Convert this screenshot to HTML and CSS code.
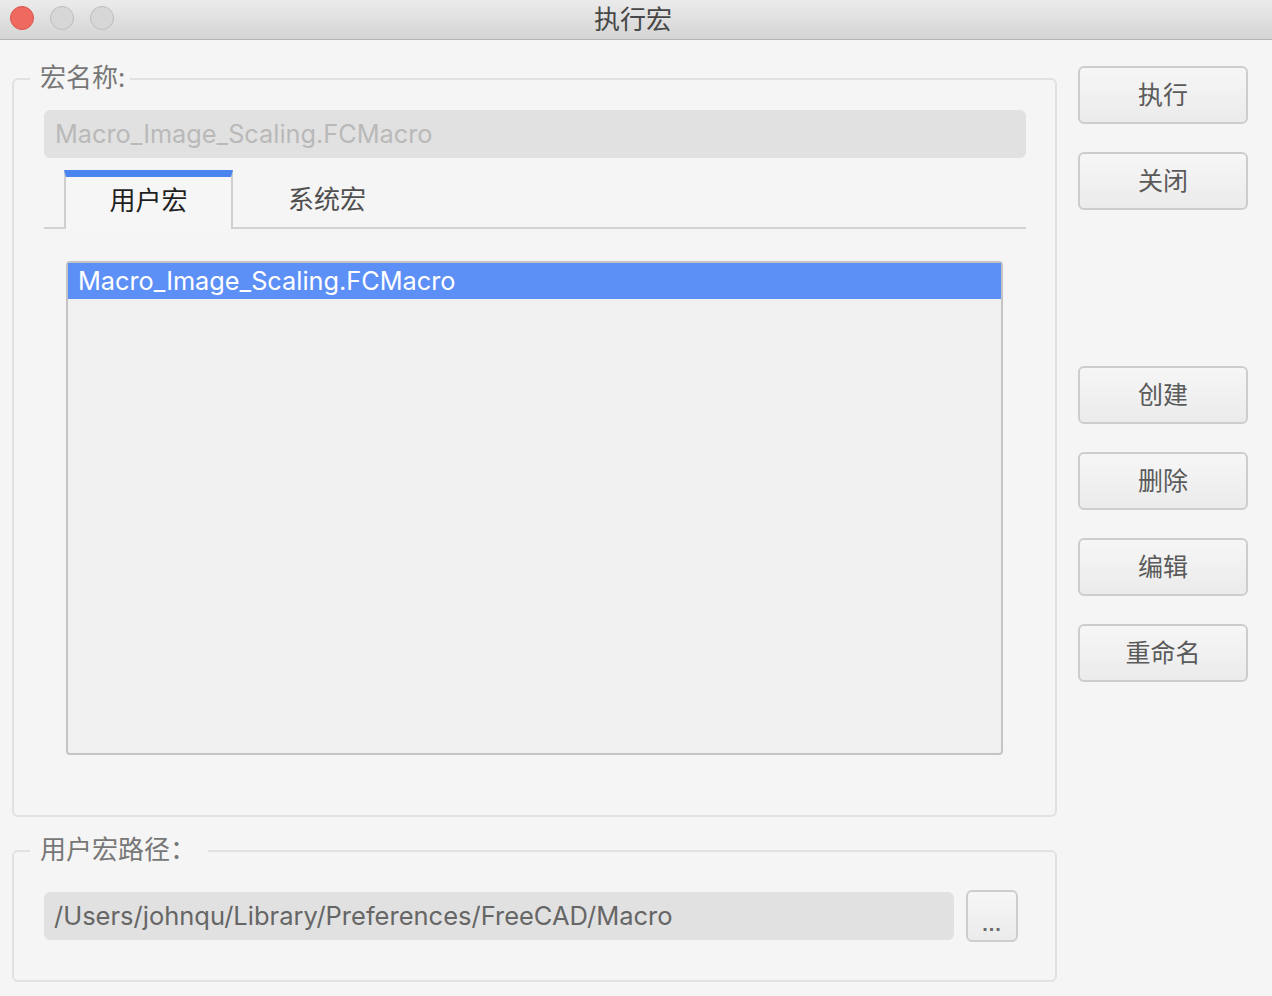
FILE: index.html
```html
<!DOCTYPE html>
<html lang="zh">
<head>
<meta charset="utf-8">
<title>执行宏</title>
<link rel="stylesheet" href="styles.css">
</head>
<body>
<div class="window">
  <div class="titlebar">
    <div class="lights">
      <span class="light red"></span>
      <span class="light"></span>
      <span class="light"></span>
    </div>
    <div class="title">执行宏</div>
  </div>
  <div class="main">
    <div class="left">
      <fieldset class="group group-name">
        <legend class="legend legend-name">宏名称:</legend>
        <div class="field disabled">Macro_Image_Scaling.FCMacro</div>
        <div class="tabs">
          <div class="tab-gap"></div>
          <div class="tab active">用户宏</div>
          <div class="tab">系统宏</div>
          <div class="tab-rest"></div>
        </div>
        <div class="list">
          <div class="row selected">Macro_Image_Scaling.FCMacro</div>
        </div>
      </fieldset>
      <fieldset class="group group-path">
        <legend class="legend legend-path">用户宏路径：</legend>
        <div class="path-row">
          <div class="field path">/Users/johnqu/Library/Preferences/FreeCAD/Macro</div>
          <button class="btn dots">...</button>
        </div>
      </fieldset>
    </div>
    <div class="right">
      <button class="btn side">执行</button>
      <button class="btn side">关闭</button>
      <div class="spacer"></div>
      <button class="btn side">创建</button>
      <button class="btn side">删除</button>
      <button class="btn side">编辑</button>
      <button class="btn side">重命名</button>
    </div>
  </div>
</div>
</body>
</html>
```

FILE: styles.css
```css
* { box-sizing: border-box; }
html, body {
  margin: 0;
  padding: 0;
  background: #f5f5f5;
}
body {
  font-family: "Inter", "Noto Sans CJK SC", sans-serif;
  font-size: 25.3px;
  width: 1272px;
  height: 996px;
  overflow: hidden;
}
.window {
  width: 1272px;
  height: 996px;
  display: flex;
  flex-direction: column;
}
.titlebar {
  height: 40px;
  flex: 0 0 40px;
  background: linear-gradient(#ebebeb, #d4d4d4);
  border-bottom: 1px solid #b3b3b3;
  display: flex;
  align-items: center;
  position: relative;
}
.lights {
  display: flex;
  gap: 16px;
  padding-left: 10px;
  padding-bottom: 3px;
}
.light {
  width: 24px;
  height: 24px;
  border-radius: 50%;
  background: #d7d7d7;
  border: 1px solid #bcbcbc;
  display: block;
}
.light.red {
  background: #ee6a5f;
  border-color: #d8544a;
}
.title {
  position: absolute;
  left: 0;
  right: 6px;
  top: 0;
  height: 39px;
  line-height: 36px;
  text-align: center;
  color: #474747;
  font-family: "Noto Sans CJK SC", sans-serif;
  font-size: 26px;
}
.main {
  display: flex;
  padding-top: 24px;
}
.left {
  margin-left: 12px;
  width: 1045px;
  display: flex;
  flex-direction: column;
}
.group {
  margin: 0;
  border: 2px solid #e1e1e1;
  border-radius: 6px;
  padding: 0 29px 0 30px;
  min-width: 0;
}
.legend {
  font-family: "Noto Sans CJK SC", sans-serif;
  font-size: 26px;
  line-height: 24px;
  height: 30px;
  color: #777777;
  margin-left: -14px;
  padding: 0 5px 6px 10px;
}
.legend-path { padding-right: 12px; }
.group-name {
  height: 753px;
  padding-bottom: 0;
}
.field {
  height: 48px;
  border-radius: 6px;
  background: #e1e1e1;
  line-height: 48px;
  padding-left: 11px;
  white-space: nowrap;
  overflow: hidden;
}
.disabled {
  margin-top: 16px;
  color: #b9b9b9;
}
.tabs {
  margin-top: 12px;
  display: flex;
  height: 59px;
  align-items: stretch;
}
.tab-gap {
  width: 20px;
  border-bottom: 2px solid #d2d2d2;
}
.tab-rest {
  flex: 1;
  border-bottom: 2px solid #d2d2d2;
}
.tab {
  font-family: "Noto Sans CJK SC", sans-serif;
  font-size: 26px;
  color: #4f4f4f;
  width: 188px;
  text-align: center;
  padding-top: 9px;
  border-bottom: 2px solid #d2d2d2;
}
.tab.active {
  width: 169px;
  color: #1f1f1f;
  border: 2px solid #cfcfcf;
  border-top: 7px solid #4a84ef;
  border-bottom: none;
  background: #f6f6f6;
  padding-top: 3px;
}
.list {
  margin: 32px 23px 0 22px;
  height: 494px;
  background: #f0f0f0;
  border: 2px solid #c4c4c4;
  border-radius: 4px;
}
.row {
  height: 36px;
  line-height: 36px;
  padding-left: 10px;
  white-space: nowrap;
}
.row.selected {
  background: #5d90f6;
  color: #ffffff;
}
.group-path {
  margin-top: 19px;
  height: 146px;
}
.path-row {
  margin-top: 24px;
  display: flex;
  align-items: center;
  gap: 12px;
}
.field.path {
  width: 910px;
  color: #666666;
  padding-left: 10px;
  font-size: 25.5px;
}
.btn {
  font-family: "Noto Sans CJK SC", sans-serif;
  font-size: 25px;
  color: #5a5a5a;
  background: linear-gradient(#f6f6f6, #ebebeb);
  border: 2px solid #cdcdcd;
  border-radius: 6px;
  padding: 0;
  margin: 0;
  cursor: default;
}
.dots {
  width: 52px;
  height: 52px;
  font-family: "Liberation Sans", sans-serif;
  font-size: 20px;
  font-weight: bold;
  letter-spacing: 1px;
  color: #6a6a6a;
  line-height: 52px;
  padding-top: 6px;
}
.right {
  margin-left: 21px;
  width: 170px;
  padding-top: 2px;
  display: flex;
  flex-direction: column;
  gap: 28px;
}
.side {
  width: 170px;
  height: 58px;
  line-height: 50px;
  padding-bottom: 4px;
}
.spacer {
  height: 100px;
}
```
